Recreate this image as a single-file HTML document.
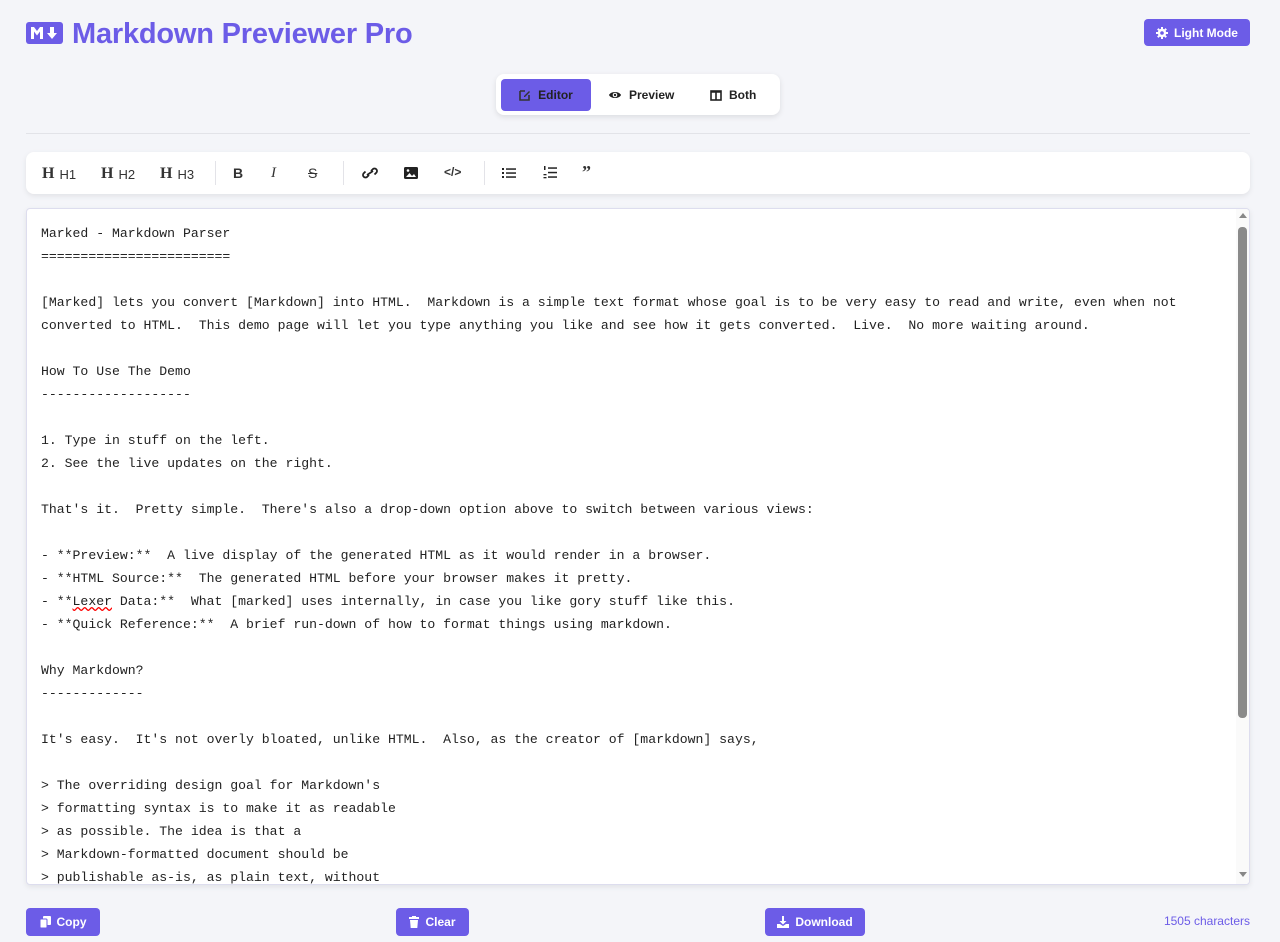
<!DOCTYPE html>
<html><head><meta charset="utf-8"><style>
*{box-sizing:border-box;margin:0;padding:0}
body{width:1280px;height:942px;background:#f4f5f9;font-family:"Liberation Sans",sans-serif;position:relative;overflow:hidden;color:#222}
.abs{position:absolute}
h1{position:absolute;left:72px;top:18px;font-size:29px;font-weight:bold;color:#6c5ce7;letter-spacing:-0.2px}
.btn{position:absolute;background:#6c5ce7;color:#fff;border-radius:4px;font-size:12px;font-weight:bold;display:flex;align-items:center;justify-content:center;gap:6px}
.tabs{position:absolute;left:496px;top:74px;width:284px;height:41px;background:#fff;border-radius:8px;box-shadow:0 2px 6px rgba(0,0,0,.1)}
.tab{position:absolute;top:5px;height:32px;display:flex;align-items:center;gap:7px;font-size:12px;font-weight:bold;color:#222}
.tb{position:absolute;left:26px;top:152px;width:1224px;height:42px;background:#fff;border-radius:8px;box-shadow:0 2px 6px rgba(0,0,0,.08)}
.ti{position:absolute;top:13px;font-size:13px;color:#333;display:flex;align-items:center;gap:5px}
.sep{position:absolute;top:9px;width:1px;height:24px;background:#e3e3e8}
.ed{position:absolute;left:26px;top:208px;width:1224px;height:677px;background:#fff;border:1px solid #dde;border-radius:4px;box-shadow:0 2px 6px rgba(0,0,0,.08);overflow:hidden}
pre{position:absolute;left:14px;top:13px;font-family:"Liberation Mono",monospace;font-size:13.15px;line-height:23px;color:#222}
</style></head><body>
<svg class="abs" style="left:26px;top:22px" width="37" height="22" viewBox="0 0 37 22"><rect width="37" height="22" rx="3" fill="#6c5ce7"/><path d="M5 17V5h3l3 4 3-4h3v12h-3V9.5l-3 4-3-4V17z" fill="#fff"/><path d="M24 5h4v6h3l-5 6-5-6h3z" fill="#fff"/></svg>
<h1>Markdown Previewer Pro</h1>
<div class="btn" style="left:1144px;top:19px;width:106px;height:27px"><svg width="12" height="12" viewBox="0 0 12 12"><g stroke="#fff" stroke-width="2"><path d="M6 0v12M0 6h12M1.8 1.8l8.4 8.4M10.2 1.8l-8.4 8.4"/></g><circle cx="6" cy="6" r="4.2" fill="#fff"/><circle cx="6" cy="6" r="1.8" fill="#6c5ce7"/></svg>Light Mode</div>
<div class="tabs">
<div class="tab" style="left:5px;width:90px;background:#6c5ce7;border-radius:4px;justify-content:center"><svg width="12" height="12" viewBox="0 0 12 12"><path d="M1 2h5M1 2v9h9V6" stroke="#333" stroke-width="1.6" fill="none"/><path d="M5 7l5-5 1 1-5 5H5z" fill="#333"/></svg>Editor</div>
<div class="tab" style="left:112px"><svg width="14" height="10" viewBox="0 0 14 10"><path d="M1 5C3 1 11 1 13 5 11 9 3 9 1 5z" fill="#222"/><circle cx="7" cy="5" r="2.3" fill="#fff"/><circle cx="7" cy="5" r="1.2" fill="#222"/></svg>Preview</div>
<div class="tab" style="left:214px"><svg width="12" height="11" viewBox="0 0 12 11"><rect x="1" y="1" width="10" height="9" stroke="#222" stroke-width="1.6" fill="none"/><path d="M6 1v9M1 2h10" stroke="#222" stroke-width="1.6"/></svg>Both</div>
</div>
<div class="abs" style="left:26px;top:133px;width:1224px;height:1px;background:#e2e3e8"></div>
<div class="tb">
<div class="ti" style="left:16px"><b style="font-family:'Liberation Serif',serif;font-size:16px">H</b>H1</div>
<div class="ti" style="left:75px"><b style="font-family:'Liberation Serif',serif;font-size:16px">H</b>H2</div>
<div class="ti" style="left:134px"><b style="font-family:'Liberation Serif',serif;font-size:16px">H</b>H3</div>
<div class="sep" style="left:189px"></div>
<div class="ti" style="left:207px;font-weight:bold;font-size:14px">B</div>
<div class="ti" style="left:245px;font-style:italic;font-family:'Liberation Serif',serif;font-size:15px">I</div>
<div class="ti" style="left:282px;text-decoration:line-through;font-size:14px">S</div>
<div class="sep" style="left:317px"></div>
<svg class="abs" style="left:336px;top:14px" width="16" height="14" viewBox="0 0 16 14"><g stroke="#222" stroke-width="1.8" fill="none"><path d="M7 9l-2 2a2.5 2.5 0 0 1-3.5-3.5l2-2"/><path d="M9 5l2-2a2.5 2.5 0 0 1 3.5 3.5l-2 2"/><path d="M5 9l6-4"/></g></svg>
<svg class="abs" style="left:378px;top:15px" width="14" height="12" viewBox="0 0 14 12"><rect width="14" height="12" rx="1.5" fill="#222"/><path d="M2 10l3.5-4 2.5 3 2-2 2 3z" fill="#fff"/><circle cx="4" cy="3.5" r="1.3" fill="#fff"/></svg>
<div class="ti" style="left:418px;font-size:12px;font-weight:bold">&lt;/&gt;</div>
<div class="sep" style="left:458px"></div>
<svg class="abs" style="left:476px;top:15px" width="14" height="12" viewBox="0 0 14 12"><g fill="#222"><rect y="1" width="2" height="2"/><rect y="5" width="2" height="2"/><rect y="9" width="2" height="2"/><rect x="4" y="1.3" width="10" height="1.5"/><rect x="4" y="5.3" width="10" height="1.5"/><rect x="4" y="9.3" width="10" height="1.5"/></g></svg>
<svg class="abs" style="left:517px;top:14px" width="14" height="13" viewBox="0 0 14 13"><g fill="#222"><rect x="1" y="0" width="1.5" height="4"/><rect x="0.5" y="8" width="3" height="1.3"/><rect x="0.5" y="11" width="3" height="1.3"/><rect x="5" y="1.3" width="9" height="1.5"/><rect x="5" y="5.8" width="9" height="1.5"/><rect x="5" y="10.3" width="9" height="1.5"/></g></svg>
<div class="ti" style="left:556px;font-size:18px;font-weight:bold;top:10px;font-family:'Liberation Serif',serif">&#8221;</div>
</div>
<div class="ed">
<pre>Marked - Markdown Parser
========================

[Marked] lets you convert [Markdown] into HTML.  Markdown is a simple text format whose goal is to be very easy to read and write, even when not
converted to HTML.  This demo page will let you type anything you like and see how it gets converted.  Live.  No more waiting around.

How To Use The Demo
-------------------

1. Type in stuff on the left.
2. See the live updates on the right.

That's it.  Pretty simple.  There's also a drop-down option above to switch between various views:

- **Preview:**  A live display of the generated HTML as it would render in a browser.
- **HTML Source:**  The generated HTML before your browser makes it pretty.
- **<span style="text-decoration:underline wavy red">Lexer</span> Data:**  What [marked] uses internally, in case you like gory stuff like this.
- **Quick Reference:**  A brief run-down of how to format things using markdown.

Why Markdown?
-------------

It's easy.  It's not overly bloated, unlike HTML.  Also, as the creator of [markdown] says,

&gt; The overriding design goal for Markdown's
&gt; formatting syntax is to make it as readable
&gt; as possible. The idea is that a
&gt; Markdown-formatted document should be
&gt; publishable as-is, as plain text, without</pre>
<div class="abs" style="left:1209px;top:0;width:14px;height:677px;background:#fafafa"></div>
<div class="abs" style="left:1212px;top:4px;width:0;height:0;border-left:4px solid transparent;border-right:4px solid transparent;border-bottom:5px solid #888"></div>
<div class="abs" style="left:1211px;top:18px;width:9px;height:491px;background:#8a8a8a;border-radius:4px"></div>
<div class="abs" style="left:1212px;top:663px;width:0;height:0;border-left:4px solid transparent;border-right:4px solid transparent;border-top:5px solid #888"></div>
</div>
<div class="btn" style="left:26px;top:908px;width:74px;height:28px"><svg width="11" height="12" viewBox="0 0 11 12"><rect x="3" y="0" width="8" height="9" rx="1" fill="#fff"/><rect x="0" y="3" width="7" height="9" rx="1" fill="#fff" stroke="#6c5ce7"/></svg>Copy</div>
<div class="btn" style="left:396px;top:908px;width:73px;height:28px"><svg width="10" height="12" viewBox="0 0 10 12"><rect x="0" y="1" width="10" height="2" fill="#fff"/><rect x="3" y="0" width="4" height="2" fill="#fff"/><path d="M1 4h8l-.7 8H1.7z" fill="#fff"/></svg>Clear</div>
<div class="btn" style="left:765px;top:908px;width:100px;height:28px"><svg width="12" height="12" viewBox="0 0 12 12"><path d="M5 0h2v5h2.5L6 8.5 2.5 5H5z" fill="#fff"/><path d="M0 8h3l3 2 3-2h3v4H0z" fill="#fff"/></svg>Download</div>
<div class="abs" style="right:30px;top:914px;font-size:12px;color:#6c5ce7">1505 characters</div>
</body></html>
